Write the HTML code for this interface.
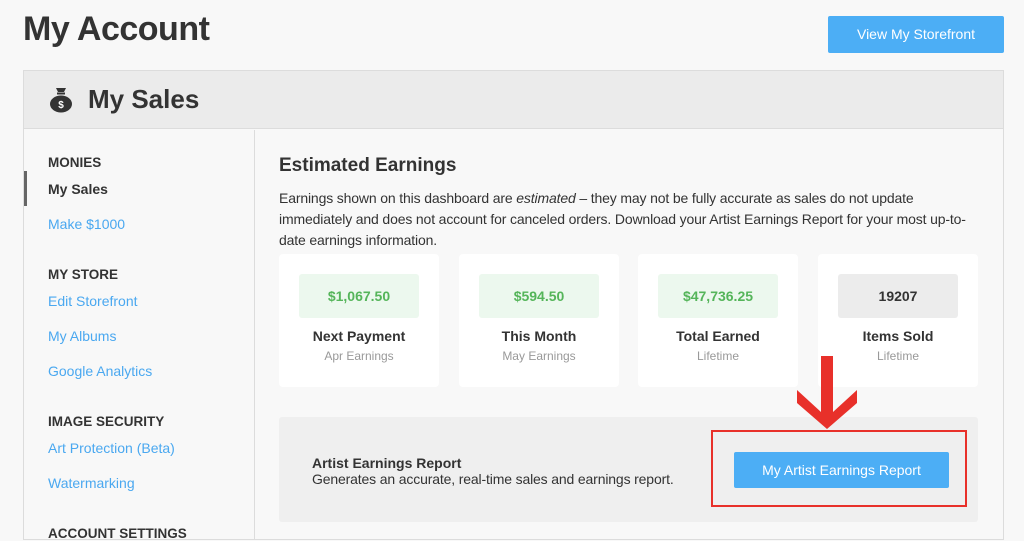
<!DOCTYPE html>
<html><head><meta charset="utf-8"><style>
*{margin:0;padding:0;box-sizing:border-box}
body{width:1024px;height:534px;overflow:hidden;background:#f8f8f8;font-family:"Liberation Sans",Arial,sans-serif;position:relative}
.a{position:absolute;white-space:nowrap}
.h{font-weight:bold;color:#333;font-size:13.5px}
.l{color:#4aa8f0;font-size:14px}
.card{position:absolute;top:254px;width:160px;height:133px;background:#fff;border-radius:4px}
.card .v{position:absolute;left:20px;top:20px;width:120px;height:44px;background:#ecf8ee;border-radius:3px;color:#55b55a;font-weight:bold;font-size:14px;text-align:center;line-height:44px}
.card .t{position:absolute;left:0;width:160px;top:74px;text-align:center;font-weight:bold;font-size:14px;color:#333}
.card .s{position:absolute;left:0;width:160px;top:95px;text-align:center;font-size:12px;color:#999}
</style></head><body>
<div class="a" style="left:23px;top:10px;font-size:34px;font-weight:bold;color:#333;letter-spacing:-0.5px">My Account</div>
<div class="a" style="left:828px;top:16px;width:176px;height:37px;background:#4caef5;border-radius:2px;color:#fff;font-size:14px;text-align:center;line-height:37px">View My Storefront</div>
<div class="a" style="left:23px;top:70px;width:981px;height:470px;border:1px solid #dcdcdc;background:#f8f8f8"></div>
<div class="a" style="left:24px;top:71px;width:979px;height:58px;background:#ebebeb;border-bottom:1px solid #dcdcdc"></div>
<svg class="a" style="left:49px;top:87px" width="24" height="26" viewBox="0 0 24 26"><path d="M7 1h10l-2 4h-6z" fill="#333"/><rect x="8" y="5.5" width="8" height="2" fill="#333"/><ellipse cx="12" cy="17" rx="11" ry="8.5" fill="#333"/><text x="12" y="21" font-size="10" font-weight="bold" fill="#fff" text-anchor="middle" font-family="Liberation Sans">$</text></svg>
<div class="a" style="left:88px;top:84px;font-size:26px;font-weight:bold;color:#333">My Sales</div>
<div class="a" style="left:254px;top:130px;width:1px;height:410px;background:#dcdcdc"></div>
<div class="a" style="left:24px;top:171px;width:3px;height:35px;background:#666"></div>
<div class="a h" style="left:48px;top:155px">MONIES</div>
<div class="a h" style="left:48px;top:181px;font-size:14px">My Sales</div>
<div class="a l" style="left:48px;top:216px">Make $1000</div>
<div class="a h" style="left:48px;top:267px">MY STORE</div>
<div class="a l" style="left:48px;top:293px">Edit Storefront</div>
<div class="a l" style="left:48px;top:328px">My Albums</div>
<div class="a l" style="left:48px;top:363px">Google Analytics</div>
<div class="a h" style="left:48px;top:414px">IMAGE SECURITY</div>
<div class="a l" style="left:48px;top:440px">Art Protection (Beta)</div>
<div class="a l" style="left:48px;top:475px">Watermarking</div>
<div class="a h" style="left:48px;top:526px">ACCOUNT SETTINGS</div>
<div class="a" style="left:279px;top:155px;font-size:19px;font-weight:bold;color:#333">Estimated Earnings</div>
<div class="a" style="left:279px;top:188px;width:700px;white-space:normal;font-size:14px;line-height:21px;color:#333;letter-spacing:-0.15px">Earnings shown on this dashboard are <i>estimated</i> – they may not be fully accurate as sales do not update immediately and does not account for canceled orders. Download your Artist Earnings Report for your most up-to-date earnings information.</div>
<div class="card" style="left:279px"><div class="v">$1,067.50</div><div class="t">Next Payment</div><div class="s">Apr Earnings</div></div>
<div class="card" style="left:459px"><div class="v">$594.50</div><div class="t">This Month</div><div class="s">May Earnings</div></div>
<div class="card" style="left:638px"><div class="v">$47,736.25</div><div class="t">Total Earned</div><div class="s">Lifetime</div></div>
<div class="card" style="left:818px"><div class="v" style="background:#ececec;color:#333">19207</div><div class="t">Items Sold</div><div class="s">Lifetime</div></div>
<div class="a" style="left:279px;top:417px;width:699px;height:105px;background:#efefef;border-radius:3px"></div>
<div class="a" style="left:312px;top:455px;font-size:14px;font-weight:bold;color:#333">Artist Earnings Report</div>
<div class="a" style="left:312px;top:471px;font-size:14px;color:#333;letter-spacing:-0.15px">Generates an accurate, real-time sales and earnings report.</div>
<div class="a" style="left:711px;top:430px;width:256px;height:77px;border:2px solid #e8302a"></div>
<div class="a" style="left:734px;top:452px;width:215px;height:36px;background:#4caef5;border-radius:2px;color:#fff;font-size:14px;text-align:center;line-height:36px">My Artist Earnings Report</div>
<svg class="a" style="left:0;top:0" width="1024" height="534"><polygon points="821,356 833,356 833,412 857,390 857,403 827,429 797,403 797,390 821,412" fill="#e8302a"/></svg>
</body></html>
